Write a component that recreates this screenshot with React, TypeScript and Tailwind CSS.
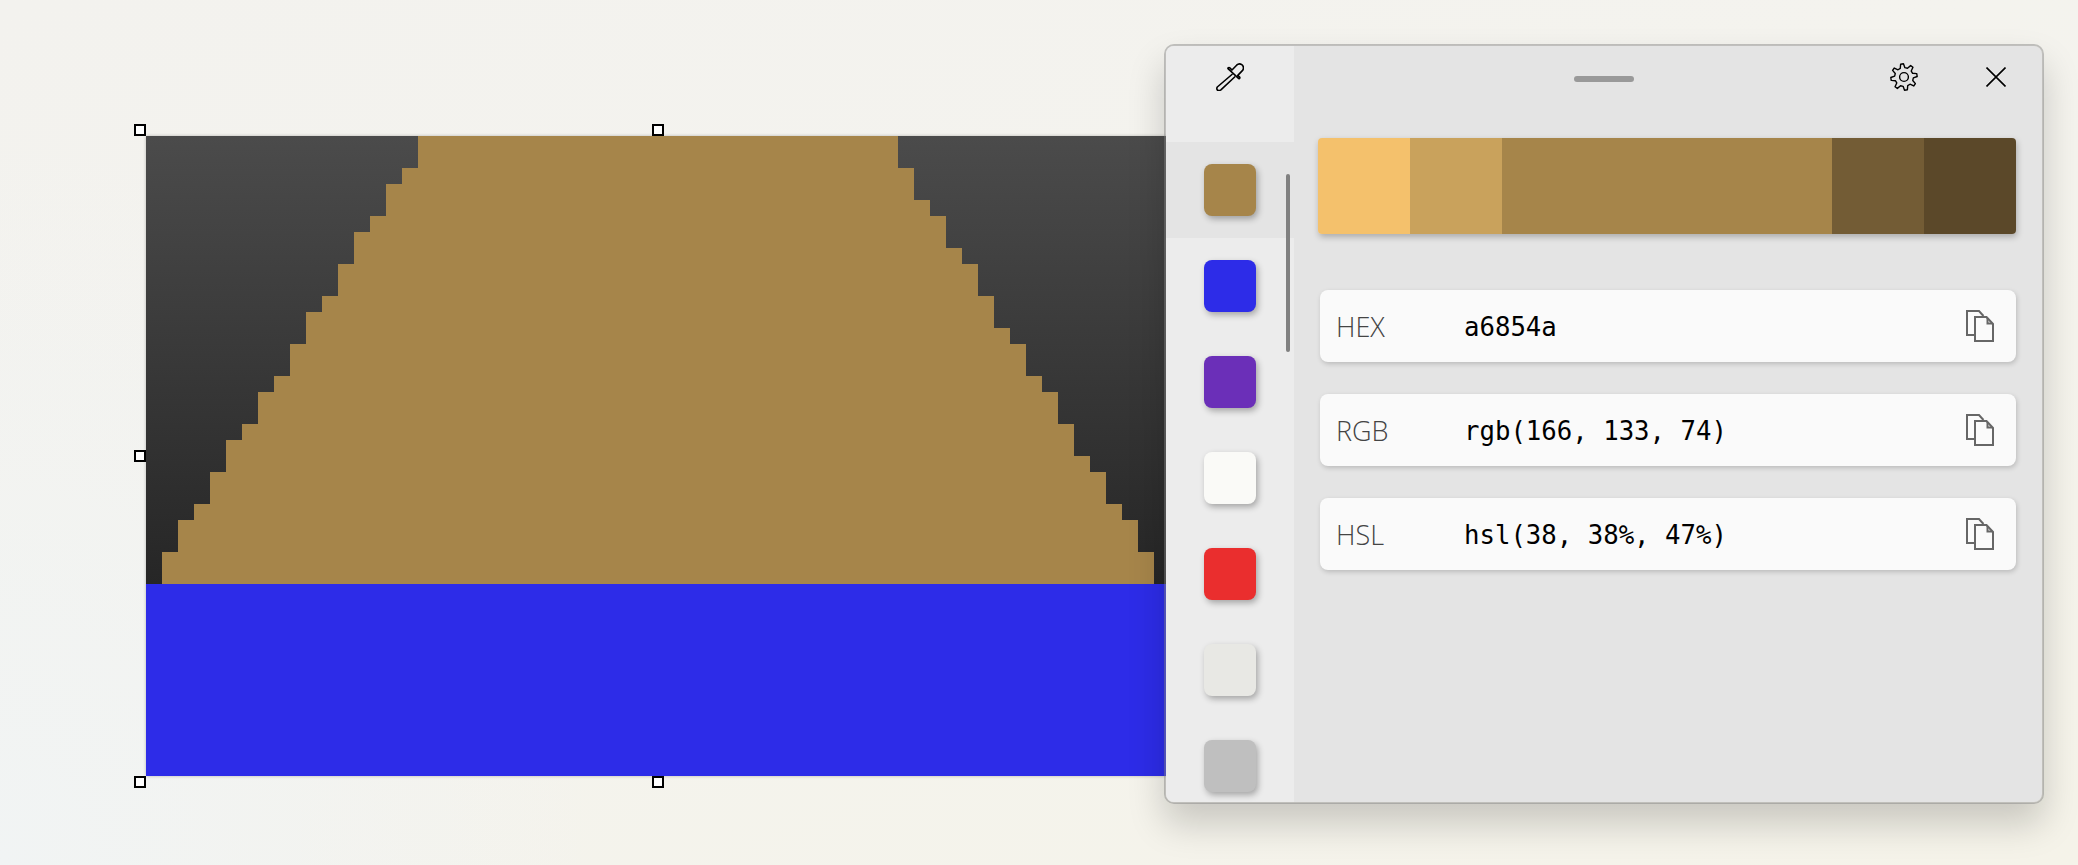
const swatches = ["#a6854a", "#2d2ce8", "#6b2fb8", "#fafaf7", "#ea2e2e", "#e8e8e4", "#bfbfbf"];

const shades = [
  { color: "#f4c16c", width: "w-[92px]" },
  { color: "#c9a25c", width: "w-[92px]" },
  { color: "#a6854a", width: "w-[330px]" },
  { color: "#735c35", width: "w-[92px]" },
  { color: "#5b4829", width: "w-[92px]" },
];

const formats = [
  { label: "HEX", value: "a6854a" },
  { label: "RGB", value: "rgb(166, 133, 74)" },
  { label: "HSL", value: "hsl(38, 38%, 47%)" },
];

// stair outline of the artwork, in px from the image's top-left corner
const leftSteps: [number, number][] = [
  [272, 0], [272, 32], [256, 32], [256, 48], [240, 48], [240, 80], [224, 80], [224, 96],
  [208, 96], [208, 128], [192, 128], [192, 160], [176, 160], [176, 176], [160, 176], [160, 208],
  [144, 208], [144, 240], [128, 240], [128, 256], [112, 256], [112, 288], [96, 288], [96, 304],
  [80, 304], [80, 336], [64, 336], [64, 368], [48, 368], [48, 384], [32, 384], [32, 416],
  [16, 416], [16, 448],
];
const rightSteps: [number, number][] = [
  [1008, 448], [1008, 416], [992, 416], [992, 384], [976, 384], [976, 368], [960, 368], [960, 336],
  [944, 336], [944, 320], [928, 320], [928, 288], [912, 288], [912, 256], [896, 256], [896, 240],
  [880, 240], [880, 208], [864, 208], [864, 192], [848, 192], [848, 160], [832, 160], [832, 128],
  [816, 128], [816, 112], [800, 112], [800, 80], [784, 80], [784, 64], [768, 64], [768, 32],
  [752, 32], [752, 0],
];
const stairPoints = [...leftSteps, ...rightSteps].map(([x, y]) => `${x},${y}`).join(" ");

function gearPath() {
  const cx = 14;
  const cy = 14;
  const pts: string[] = [];
  for (let i = 0; i < 8; i++) {
    const a = (i * Math.PI) / 4 - Math.PI / 8;
    const step = Math.PI / 4;
    const profile: [number, number][] = [
      [9.4, a - step * 0.02],
      [13.2, a + step * 0.17],
      [13.2, a + step * 0.45],
      [9.4, a + step * 0.62],
    ];
    profile.forEach(([r, t]) => {
      pts.push(`${(cx + r * Math.cos(t)).toFixed(2)} ${(cy + r * Math.sin(t)).toFixed(2)}`);
    });
  }
  return `M${pts.join(" L")} Z`;
}

function CopyIcon() {
  return (
    <svg width="28" height="32" viewBox="0 0 28 32" fill="none" stroke="#666666" strokeWidth="2">
      <path d="M8 25H1V1H13L17.5 6" />
      <path d="M9 7H20.5L27 14V31H9Z" />
      <path d="M21.5 8V13.5H26" />
    </svg>
  );
}

function Handle({ className }: { className: string }) {
  return <div className={`absolute h-3 w-3 border-2 border-black bg-white ${className}`} />;
}

export default function App() {
  return (
    <div className="relative h-[865px] w-[2078px] overflow-hidden bg-[linear-gradient(160deg,#f3f2ee_0%,#f4f3ee_45%,#f5f3e9_100%)]">
      <div className="absolute left-0 top-0 h-full w-[700px] bg-[radial-gradient(ellipse_at_bottom_left,#f1f4f4_0%,#f3f3ee00_60%)]" />

      {/* selected artwork */}
      <div className="absolute left-[146px] top-[136px] h-[640px] w-[1024px] shadow-[0_0_3px_rgba(0,0,0,0.25)]">
        <div className="h-[448px] bg-[linear-gradient(180deg,#4b4b4b_0%,#262626_100%)]">
          <svg width="1024" height="448" viewBox="0 0 1024 448" className="block">
            <polygon points={stairPoints} fill="#a6854a" />
          </svg>
        </div>
        <div className="h-[192px] bg-[#2d2ce8]" />
      </div>
      <Handle className="left-[134px] top-[124px]" />
      <Handle className="left-[652px] top-[124px]" />
      <Handle className="left-[134px] top-[450px]" />
      <Handle className="left-[134px] top-[776px]" />
      <Handle className="left-[652px] top-[776px]" />

      {/* color picker window */}
      <div className="absolute left-[1164px] top-[44px] flex h-[760px] w-[880px] overflow-hidden rounded-[10px] border-2 border-[#80808073] bg-[#e4e4e4] bg-clip-padding shadow-[0_20px_36px_rgba(0,0,0,0.18)]">
        <div className="absolute left-[408px] top-[30px] h-1.5 w-[60px] rounded-full bg-[#999999]" />

        <aside className="relative w-32 shrink-0 overflow-hidden bg-[#ececec]">
          <div className="flex h-24 justify-center pt-[17px]">
            <svg width="28" height="28" viewBox="0 0 28 28" fill="none" stroke="#000000" strokeWidth="1.6" strokeLinejoin="round">
              <path d="M16.5 11L1.3 24C.3 25.5 1 27.6 2.8 27.6 3.6 27.6 4.3 27.3 4.9 26.8L19.2 13.5" />
              <path d="M12 5.6L22.8 15.6C23.6 16 24.2 14.8 23.6 14L21.8 12.4 26.6 7.4C28 5.6 27.6 2.8 25.8 1.6 24 .5 22 .9 20.6 2.2L16 7 13.8 4.8C13 4 11.6 4.8 12 5.6Z" />
            </svg>
          </div>
          {swatches.map((color, i) => (
            <div key={color} className={`flex h-24 items-center justify-center ${i === 0 ? "bg-[#e4e4e4]" : ""}`}>
              <div
                className="h-[52px] w-[52px] rounded-lg shadow-[2px_3px_6px_rgba(0,0,0,0.3)]"
                style={{ backgroundColor: color }}
              />
            </div>
          ))}
          <div className="absolute left-[120px] top-[128px] h-[178px] w-1 rounded-full bg-[#808080]" />
        </aside>

        <main className="flex-1">
          <div className="flex h-[62px] justify-end">
            <button className="flex w-[92px] items-center justify-center">
              <svg width="28" height="28" viewBox="0 0 28 28" fill="none" stroke="#000000" strokeWidth="1.4" strokeLinejoin="round">
                <path d={gearPath()} />
                <circle cx="14" cy="14" r="4.4" />
              </svg>
            </button>
            <button className="flex w-[92px] items-center justify-center">
              <svg width="20" height="20" viewBox="0 0 20 20" stroke="#000000" strokeWidth="1.6">
                <path d="M.5.5L19.5 19.5M19.5.5L.5 19.5" />
              </svg>
            </button>
          </div>

          <div className="ml-6 mr-[26px] mt-[30px] flex h-24 overflow-hidden rounded-[4px] shadow-[1px_3px_6px_rgba(0,0,0,0.25)]">
            {shades.map((s) => (
              <div key={s.color} className={s.width} style={{ backgroundColor: s.color }} />
            ))}
          </div>

          <div className="ml-[26px] mr-[26px] mt-14 flex flex-col gap-8">
            {formats.map((f) => (
              <div key={f.label} className="flex h-[72px] items-center rounded-lg bg-[#fafafa] pl-4 pr-[22px] shadow-[1px_2px_5px_rgba(0,0,0,0.18)]">
                <span className="w-[128px] pt-[3px] font-['Open_Sans',sans-serif] text-[27px] font-light text-[#444444]">{f.label}</span>
                <span className="flex-1 pt-[2px] font-['DejaVu_Sans_Mono',monospace] text-[25.7px] text-black">{f.value}</span>
                <CopyIcon />
              </div>
            ))}
          </div>
        </main>
      </div>
    </div>
  );
}
